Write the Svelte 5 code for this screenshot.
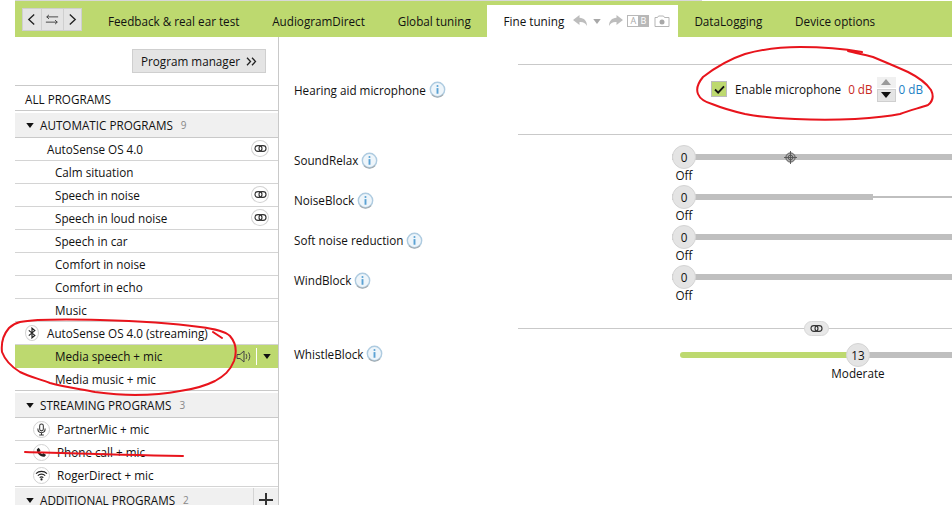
<script>
  const tabs = [
    { label: 'Feedback & real ear test' },
    { label: 'AudiogramDirect' },
    { label: 'Global tuning' },
    { label: 'Fine tuning', active: true },
    { label: 'DataLogging' },
    { label: 'Device options' }
  ];
  const autoRows = [
    { label: 'Calm situation' },
    { label: 'Speech in noise', link: true },
    { label: 'Speech in loud noise', link: true },
    { label: 'Speech in car' },
    { label: 'Comfort in noise' },
    { label: 'Comfort in echo' },
    { label: 'Music' }
  ];
  const sliders = [
    { label: 'SoundRelax', target: true },
    { label: 'NoiseBlock', partial: true },
    { label: 'Soft noise reduction' },
    { label: 'WindBlock' }
  ];
</script>

{#snippet link()}
  <svg class="linkicon" viewBox="0 0 14 8" width="13" height="7"><rect x="0.7" y="0.7" width="8" height="6.600" rx="3.300" fill="none" stroke="#333" stroke-width="1.300"/><rect x="5.300" y="0.7" width="8" height="6.600" rx="3.300" fill="none" stroke="#333" stroke-width="1.300"/></svg>
{/snippet}

{#snippet linkBadge()}
  <span class="badge small">{@render link()}</span>
{/snippet}

{#snippet info()}
  <svg class="info" viewBox="0 0 18 18" width="17" height="17"><circle cx="9" cy="9" r="7.600" fill="#eef5fa" stroke="#aecbe0" stroke-width="1.500"/><path d="M3 14.500a8 8 0 0 0 12 0" fill="none" stroke="#a3abb0" stroke-width="1.200"/><circle cx="9" cy="5.300" r="1.100" fill="#5aa2d4"/><rect x="8" y="7.500" width="2" height="6" fill="#5aa2d4"/></svg>
{/snippet}

{#snippet caret()}
  <svg class="caret" viewBox="0 0 9 6" width="8" height="5"><path d="M0 0h9L4.500 6z" fill="#111"/></svg>
{/snippet}

<div class="page">
  <div class="topline"></div>
  <header class="bar">
    <div class="nav">
      <button class="navbtn" aria-label="Back"><svg viewBox="0 0 10 14" width="9" height="13"><path d="M8 1.500 2 7l6 5.500" fill="none" stroke="#222" stroke-width="1.500"/></svg></button>
      <button class="navbtn wide" aria-label="Swap"><svg viewBox="0 0 16 12" width="14" height="11"><path d="M15 3H2M4.500 .7 2 3l2.500 2.300M1 9h13M11.500 6.700 14 9l-2.500 2.300" fill="none" stroke="#333" stroke-width="1"/></svg></button>
      <button class="navbtn" aria-label="Forward"><svg viewBox="0 0 10 14" width="9" height="13"><path d="M2 1.500 8 7l-6 5.500" fill="none" stroke="#222" stroke-width="1.500"/></svg></button>
    </div>
    <nav class="tabs">
      {#each tabs as t}
        <div class="tab" class:active={t.active}>
          <span>{t.label}</span>
          {#if t.active}
            <span class="tools">
              <svg viewBox="0 0 15 12" width="15" height="12"><path d="M6.500 0 0 5l6.500 5V7c3.500-.3 6 1 7.500 4 0-5-3-8-7.500-8.200z" fill="#bdbdbd"/></svg>
              <svg viewBox="0 0 9 6" width="8" height="5"><path d="M0 0h9L4.500 6z" fill="#a8a8a8"/></svg>
              <svg class="redo" viewBox="0 0 15 12" width="15" height="12"><path d="M8.500 0 15 5l-6.500 5V7C5 6.700 2.500 8 1 11c0-5 3-8 7.500-8.200z" fill="#bdbdbd"/></svg>
              <span class="ab"><i>A</i><b>B</b></span>
              <svg viewBox="0 0 16 12" width="16" height="12"><path d="M1 2.500h2.500L4.500 1h5l1 1.500H15v9H1z" fill="#fff" stroke="#b5b5b5"/><circle cx="8" cy="7" r="2.500" fill="#a8a8a8"/></svg>
            </span>
          {/if}
        </div>
      {/each}
    </nav>
  </header>

  <div class="main">
    <aside class="side">
      <div class="pmwrap">
        <button class="pm"><span>Program manager</span><svg viewBox="0 0 11 9" width="11" height="9"><path d="M1 .8 4.500 4.500 1 8.200M6 .8 9.500 4.500 6 8.200" fill="none" stroke="#222" stroke-width="1.300"/></svg></button>
      </div>
      <div class="all">ALL PROGRAMS</div>

      <div class="head">{@render caret()}<span>AUTOMATIC PROGRAMS</span><em>9</em></div>
      <div class="row lvl1"><span>AutoSense OS 4.0</span>{@render linkBadge()}</div>
      {#each autoRows as r}
        <div class="row lvl2"><span>{r.label}</span>{#if r.link}{@render linkBadge()}{/if}</div>
      {/each}
      <div class="row iconrow">
        <span class="badge bt"><svg viewBox="0 0 10 14" width="8" height="12"><path d="M1 3.700 8.500 10 5 13V1l3.500 3L1 10.300" fill="none" stroke="#222" stroke-width="1.500"/></svg></span>
        <span>AutoSense OS 4.0 (streaming)</span>
      </div>
      <div class="row lvl2 selected">
        <span>Media speech + mic</span>
        <span class="seltools">
          <svg viewBox="0 0 16 13" width="16" height="13"><path d="M1 4.500h3L8 1v11L4 8.500H1z" fill="none" stroke="#444"/><path d="M10 4c1 1.500 1 3.500 0 5M12.500 2.500c1.700 2.500 1.700 5.500 0 8" fill="none" stroke="#444"/></svg>
          <i class="sep"></i>
          {@render caret()}
        </span>
      </div>
      <div class="row lvl2 last"><span>Media music + mic</span></div>

      <div class="head">{@render caret()}<span>STREAMING PROGRAMS</span><em>3</em></div>
      <div class="row iconrow2">
        <span class="badge prog"><svg viewBox="0 0 12 14" width="11" height="13"><rect x="4" y="1" width="4" height="7.500" rx="2" fill="none" stroke="#333" stroke-width="1.100"/><path d="M2 6c0 6 8 6 8 0M6 10.500V13M3.500 13h5" fill="none" stroke="#333" stroke-width="1.100"/></svg></span>
        <span>PartnerMic + mic</span>
      </div>
      <div class="row iconrow2">
        <span class="badge prog"><svg viewBox="0 0 12 12" width="11" height="11"><path d="M1 2.500 3 .8l2 3-1.200 1.100c.6 1.300 1.600 2.300 2.900 2.900L8 6.600l3 2-1.700 2C5 11.500.2 6.500 1 2.500z" fill="#222"/></svg></span>
        <span>Phone call + mic</span>
      </div>
      <div class="row iconrow2 end">
        <span class="badge prog"><svg viewBox="0 0 14 12" width="13" height="11"><path d="M1 4a8.500 8.500 0 0 1 12 0M3 6.200a5.500 5.500 0 0 1 8 0M5 8.300a2.800 2.800 0 0 1 4 0" fill="none" stroke="#222" stroke-width="1.200"/><circle cx="7" cy="10.300" r="1.200" fill="#222"/></svg></span>
        <span>RogerDirect + mic</span>
      </div>
      <div class="head addl">{@render caret()}<span>ADDITIONAL PROGRAMS</span><em>2</em><b class="plus"><svg viewBox="0 0 14 14" width="14" height="14"><path d="M7 0v14M0 7h14" stroke="#333" stroke-width="2"/></svg></b></div>
    </aside>

    <section class="content">
      <div class="rule"></div>
      <div class="microw">
        <div class="lab">Hearing aid microphone {@render info()}</div>
        <div class="mic">
          <span class="check"><svg viewBox="0 0 12 10" width="11" height="9"><path d="M1 5l3.500 3.500L11 1.500" fill="none" stroke="#111" stroke-width="2"/></svg></span>
          <span class="enable">Enable microphone</span>
          <span class="red">0 dB</span>
          <span class="spin">
            <i class="up"><svg viewBox="0 0 10 6" width="10" height="6"><path d="M0 6h10L5 0z" fill="#9a9a9a"/></svg></i>
            <i class="down"><svg viewBox="0 0 10 6" width="10" height="6"><path d="M0 0h10L5 6z" fill="#111"/></svg></i>
          </span>
          <span class="blue">0 dB</span>
        </div>
      </div>
      <div class="rule"></div>

      <div class="sliders">
        {#each sliders as s}
          <div class="srow">
            <div class="lab">{s.label} {@render info()}</div>
            <div class="sl">
              <div class="track" class:partial={s.partial}>
                <span class="knob">0</span>
                {#if s.target}
                  <svg class="target" viewBox="0 0 14 14" width="13" height="13"><circle cx="7" cy="7" r="5" fill="#aaa" stroke="#555"/><path d="M7 0v14M0 7h14" stroke="#555"/><circle cx="7" cy="7" r="2.500" fill="none" stroke="#555"/></svg>
                {/if}
              </div>
              <div class="cap">Off</div>
            </div>
          </div>
        {/each}
      </div>

      <div class="rule linked"><span class="pill">{@render link()}</span></div>

      <div class="wrow">
        <div class="lab whistle">WhistleBlock {@render info()}</div>
        <div class="wsl">
          <div class="wtrack">
            <i class="fill"></i>
            <span class="knob wk">13</span>
            <i class="rest"></i>
          </div>
          <div class="wcap">Moderate</div>
        </div>
      </div>
    </section>
  </div>

  <svg class="ink" viewBox="0 0 952 505" width="952" height="505" fill="none" stroke="#e8141c" stroke-width="2" stroke-linecap="round" stroke-linejoin="round">
    <path d="M862 52C845 49 825 47 800 47 780 47 763 49 745 54 727 60 712 70 703 77 698 83 696 89 698 94 700 99 705 102 712 104 722 108 732 111 745 114 760 117 775 118 795 119 815 120 835 120 855 119 870 118 885 117 900 114 910 110 920 108 928 105 933 101 934 96 931 90 927 84 920 78 908 72 897 67 885 62 873 57 862 54 855 53 848 51"/>
    <path d="M213 332 222 338M20 322C35 319 60 319 100 320 135 321 170 323 200 327 215 329 225 331 230 336 236 343 237 352 234 361 230 371 224 376 215 381 205 386 195 389 180 391 165 394 150 395 135 395 120 395 110 394 95 392 80 389 65 387 50 383 40 379 30 377 20 372 10 366 5 360 2 352 1 343 3 335 9 328 13 324 16 323 20 322"/>
    <path d="M25 452C60 453 110 455 183 456"/>
  </svg>
</div>

<style>
  :global(body) { margin: 0; background: #fff; overflow: hidden; }
  .page { position: relative; width: 952px; height: 505px; overflow: hidden; font-family: "Open Sans", "Noto Sans", sans-serif; font-size: 11.7px; color: #111; background: #fff; }
  .topline { height: 1px; width: 687px; margin-left: 15px; background: #d8d8d8; }
  .bar { display: flex; align-items: stretch; height: 36px; margin-left: 15px; background: #bdd96f; }
  .nav { display: flex; flex: none; align-self: flex-start; margin: 7px 0 0 7px; width: 60px; height: 23px; box-sizing: border-box; border: 1px solid #cfcfcf; background: #e4e4e4; }
  .navbtn { flex: 1; border: 0; border-right: 1px solid #cfcfcf; background: none; padding: 0; display: flex; align-items: center; justify-content: center; }
  .navbtn:last-child { border-right: 0; }
  .navbtn.wide { flex: 1.2; }
  .tabs { display: flex; margin-left: 9.6px; white-space: nowrap; }
  .tab { display: flex; align-items: center; padding: 0 16.4px; margin-top: 4px; height: 32px; }
  .tab.active { background: #fff; padding-right: 8px; }
  .tools { display: inline-flex; align-items: center; gap: 4.7px; margin-left: 9px; }
  .tools .redo { margin-left: 2px; }
  .ab { display: inline-flex; width: 20px; height: 10px; border: 1px solid #b8b8b8; font-size: 9px; line-height: 10px; text-align: center; }
  .ab i { flex: 1; font-style: normal; color: #aaa; }
  .ab b { flex: 1; font-weight: 400; background: #b8b8b8; color: #fff; }

  .main { display: flex; height: 468px; }
  .side { width: 263px; margin-left: 15px; border-right: 1px solid #c9c9c9; flex: none; }
  .pmwrap { display: flex; justify-content: flex-end; padding: 12px 12px 12px 0; height: 24px; }
  .pm { width: 134px; height: 24px; padding: 0 8px; background: #e4e4e4; border: 1px solid #cfcfcf; font: inherit; color: #111; display: flex; align-items: center; justify-content: space-between; box-sizing: border-box; }
  .all { height: 24px; line-height: 26px; padding-left: 10px; border-top: 1px solid #c9c9c9; border-bottom: 1px solid #c9c9c9; margin-bottom: 2px; }
  .head { height: 24px; display: flex; align-items: center; background: #f0f0f0; border-bottom: 1px solid #c9c9c9; position: relative; }
  .head .caret { margin: 0 6px 0 11px; }
  .head em { font-style: normal; color: #888; font-size: 10px; margin-left: 8px; }
  .plus { position: absolute; right: 0; top: 0; width: 24px; height: 24px; border-left: 1px solid #d4d4d4; display: flex; align-items: center; justify-content: center; }
  .row { height: 22px; display: flex; align-items: center; border-bottom: 1px solid #d4d4d4; position: relative; }
  .lvl1 { padding-left: 32px; }
  .lvl2 { padding-left: 40px; }
  .iconrow { padding-left: 10px; gap: 8px; }
  .iconrow2 { padding-left: 18px; gap: 7px; }
  .row > .small { position: absolute; right: 9px; top: 2px; }
  .row.selected { background: #bdd96f; border-bottom-color: #bdd96f; }
  .row.last { border-bottom: 1px solid #c9c9c9; margin-bottom: 2px; }
  .row.end { margin-bottom: 1px; }
  .seltools { position: absolute; right: 0; top: 0; height: 22px; display: flex; align-items: center; }
  .sep { width: 1px; height: 17px; background: #fff; margin: 0 6px 0 4px; }
  .seltools .caret { margin-right: 7px; }
  .badge { display: inline-flex; align-items: center; justify-content: center; box-sizing: border-box; flex: none; border-radius: 50%; border: 1px solid #d2d2d2; background: #fff; }
  .badge.small { width: 18px; height: 17px; }
  .badge.prog { width: 17px; height: 17px; }
  .badge.bt { width: 14px; height: 16px; }
  .linkicon { display: block; }

  .content { flex: 1; min-width: 0; padding-top: 27px; }
  .rule { height: 1px; background: #c9c9c9; margin-left: 239px; position: relative; }
  .microw { height: 69px; display: flex; align-items: center; padding-left: 15px; position: relative; }
  .lab { display: flex; align-items: center; gap: 3px; white-space: nowrap; }
  .microw .lab { margin-top: -20px; }
  .mic { position: absolute; left: 432px; top: 12px; height: 24px; display: flex; align-items: center; }
  .check { width: 16px; height: 16px; box-sizing: border-box; border: 1px solid #bcbcbc; background: #bdd96f; display: flex; align-items: center; justify-content: center; }
  .enable { margin-left: 8px; }
  .red { color: #c8281e; margin-left: 7px; }
  .blue { color: #1e7fc4; margin-left: 3px; }
  .spin { display: flex; flex-direction: column; margin-left: 4px; width: 19px; height: 25px; }
  .spin i { flex: 1; display: flex; align-items: center; justify-content: center; background: #f0f0f0; }
  .spin .down { background: #e4e4e4; border: 1px solid #cfcfcf; margin-top: 1px; }

  .sliders { padding-top: 10px; display: flex; flex-direction: column; }
  .srow { height: 40px; display: grid; grid-template-columns: 378px 1fr; padding-left: 15px; }
  .srow .lab { align-self: start; height: 24px; margin-top: 3px; }
  .sl { position: relative; }
  .track { position: relative; height: 6px; margin-top: 9px; background: #bfbfbf; }
  .track.partial { background: linear-gradient(#bfbfbf,#bfbfbf) 0 0/201px 6px no-repeat, linear-gradient(#bfbfbf,#bfbfbf) 0 2px/100% 2px no-repeat; }
  .knob { position: absolute; left: 0; top: -9px; width: 24px; height: 24px; box-sizing: border-box; border-radius: 50%; background: #e4e4e4; border: 1px solid #d4d4d4; display: flex; align-items: center; justify-content: center; }
  .target { position: absolute; left: 112px; top: -3.500px; }
  .cap { position: absolute; left: 0; top: 22px; width: 24px; text-align: center; line-height: 16px; }

  .rule.linked { margin-top: 23px; }
  .pill { position: absolute; left: 286px; top: -7px; width: 25px; height: 15px; border-radius: 8px; background: #e8e8e8; border: 1px solid #d8d8d8; box-sizing: border-box; display: flex; align-items: center; justify-content: center; }
  .wrow { display: grid; grid-template-columns: 386px 1fr; padding: 17px 0 0 15px; }
  .lab.whistle { align-self: start; margin-top: -1px; }
  .wsl { position: relative; }
  .wtrack { position: relative; display: flex; height: 6px; margin-top: 6px; }
  .fill { width: 167px; background: #bdd96f; border-radius: 3px 0 0 3px; }
  .rest { flex: 1; background: #bfbfbf; }
  .knob.wk { left: 166px; top: -9px; }
  .wcap { position: absolute; left: 138px; width: 80px; top: 19px; text-align: center; line-height: 16px; }
  .ink { position: absolute; left: 0; top: 0; pointer-events: none; }
</style>
